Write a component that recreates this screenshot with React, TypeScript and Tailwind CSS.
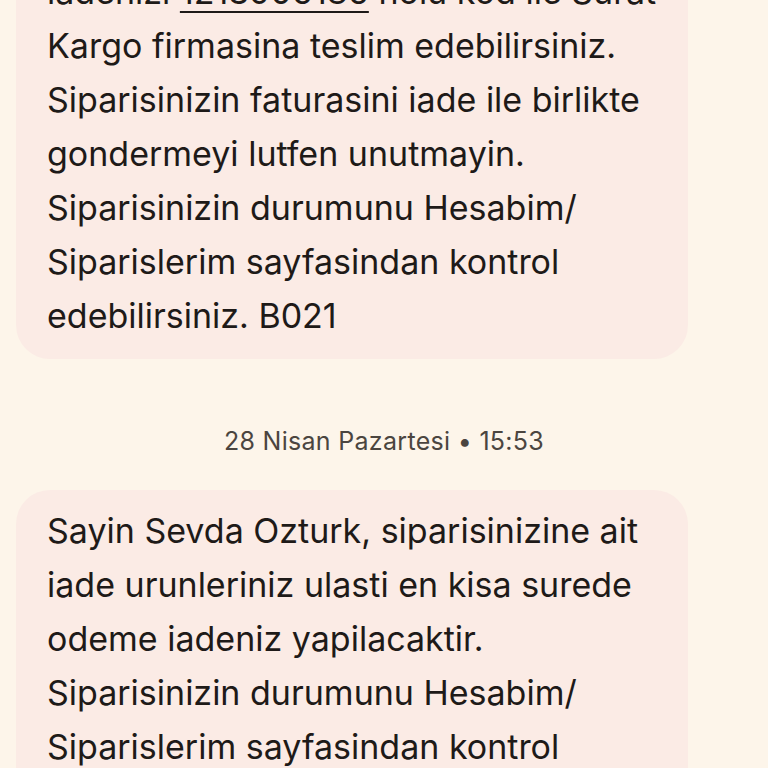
const FIRST = [
  'Kargo firmasina teslim edebilirsiniz.',
  'Siparisinizin faturasini iade ile birlikte',
  'gondermeyi lutfen unutmayin.',
  'Siparisinizin durumunu Hesabim/',
  'Siparislerim sayfasindan kontrol',
  'edebilirsiniz. B021',
];

const SECOND = [
  'Sayin Sevda Ozturk, siparisinizine ait',
  'iade urunleriniz ulasti en kisa surede',
  'odeme iadeniz yapilacaktir.',
  'Siparisinizin durumunu Hesabim/',
  'Siparislerim sayfasindan kontrol',
  'edebilirsiniz. B021',
];

function Bubble({ children, className = '' }: { children: React.ReactNode; className?: string }) {
  return (
    <div
      className={`ml-4 w-[672px] rounded-[34px] bg-[#fbebe5] pl-[31px] pr-6 pt-[14px] pb-4 text-[34px] leading-[54px] text-[#1e1a18] ${className}`}
    >
      {children}
    </div>
  );
}

export default function App() {
  return (
    <div className="h-[768px] overflow-hidden bg-[#fdf5ea] font-['Inter',sans-serif]">
      {/* earlier message, scrolled partly off the top */}
      <Bubble className="-mt-[49px]">
        <div className="whitespace-nowrap">
          iadenizi{' '}
          <span className="underline decoration-[2px] underline-offset-[7px]">1213906186</span> nolu
          kod ile Surat
        </div>
        {FIRST.map((line, i) => (
          <div key={i} className="whitespace-nowrap">
            {line}
          </div>
        ))}
      </Bubble>

      <div className="flex h-[131px] justify-center pt-[65px] text-[25px] leading-[34px] tracking-[0.3px] text-[#4b4540]">
        28 Nisan Pazartesi • 15:53
      </div>

      <Bubble>
        {SECOND.map((line, i) => (
          <div key={i} className="whitespace-nowrap">
            {line}
          </div>
        ))}
      </Bubble>
    </div>
  );
}
